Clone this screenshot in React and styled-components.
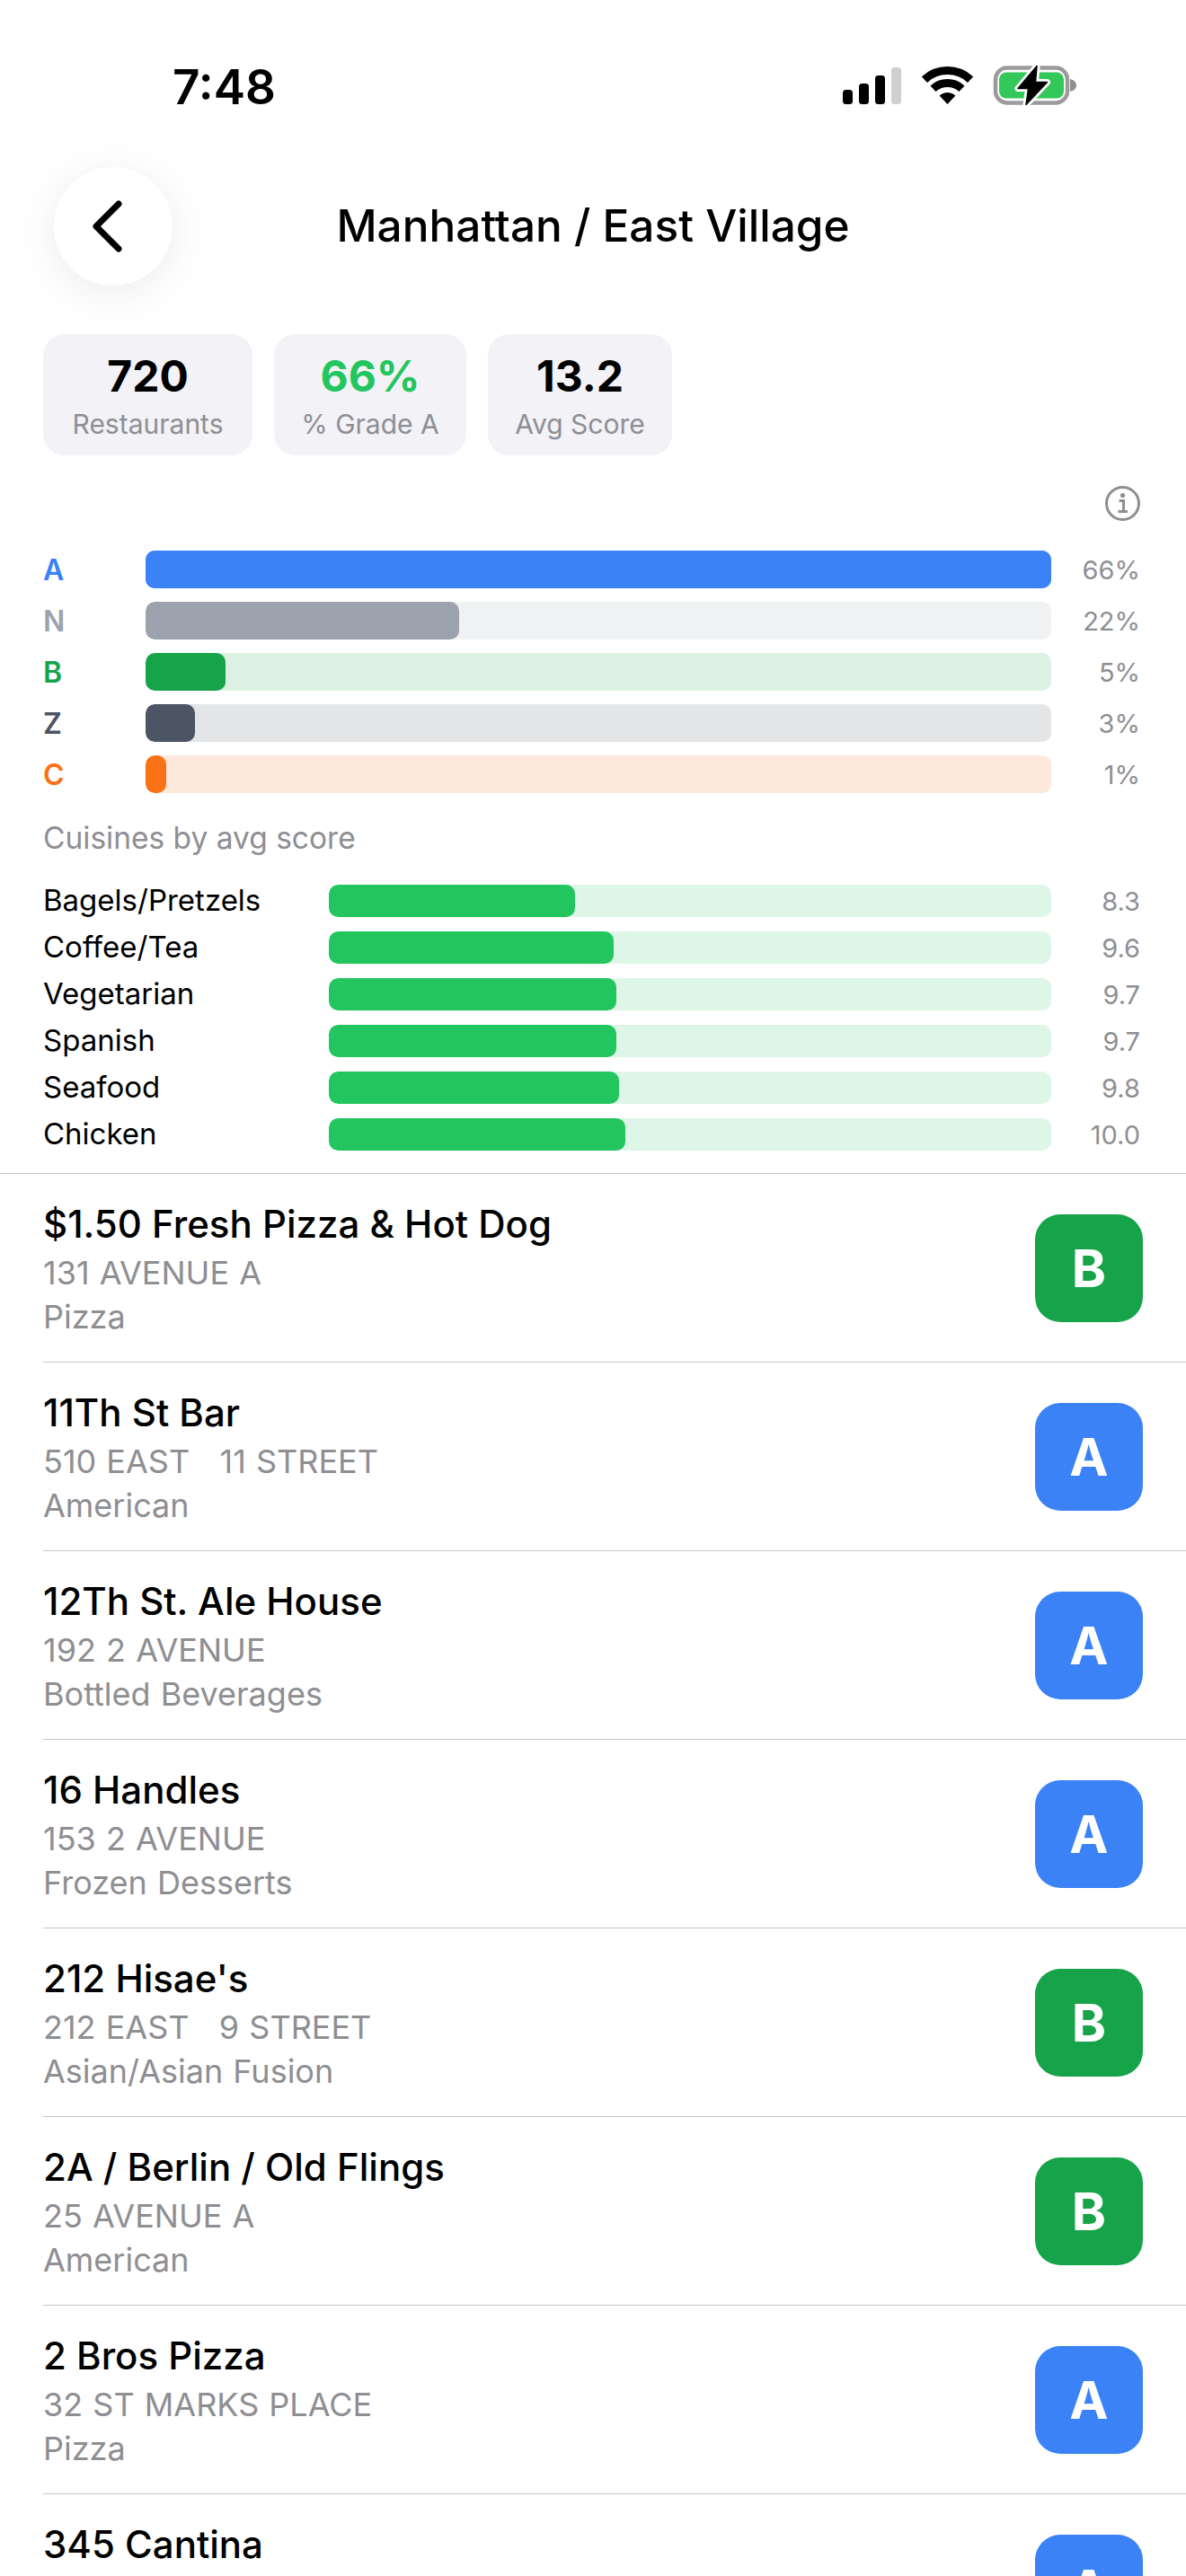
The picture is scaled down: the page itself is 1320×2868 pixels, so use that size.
import React from "react";
import styled, { createGlobalStyle } from "styled-components";

const GRADES = [
  { letter: "A", pct: "66%", width: 1008, color: "#3b82f6", track: "#3b82f6" },
  { letter: "N", pct: "22%", width: 349, color: "#9ca3af", track: "#f0f1f3" },
  { letter: "B", pct: "5%", width: 89, color: "#16a34a", track: "#dcf1e4" },
  { letter: "Z", pct: "3%", width: 55, color: "#4b5563", track: "#e4e5e7" },
  { letter: "C", pct: "1%", width: 23, color: "#f97316", track: "#fde8dc" },
];

const CUISINES = [
  { name: "Bagels/Pretzels", score: "8.3" },
  { name: "Coffee/Tea", score: "9.6" },
  { name: "Vegetarian", score: "9.7" },
  { name: "Spanish", score: "9.7" },
  { name: "Seafood", score: "9.8" },
  { name: "Chicken", score: "10.0" },
];

const RESTAURANTS = [
  { name: "$1.50 Fresh Pizza & Hot Dog", address: "131 AVENUE A", cuisine: "Pizza", grade: "B" },
  { name: "11Th St Bar", address: "510 EAST   11 STREET", cuisine: "American", grade: "A" },
  { name: "12Th St. Ale House", address: "192 2 AVENUE", cuisine: "Bottled Beverages", grade: "A" },
  { name: "16 Handles", address: "153 2 AVENUE", cuisine: "Frozen Desserts", grade: "A" },
  { name: "212 Hisae's", address: "212 EAST   9 STREET", cuisine: "Asian/Asian Fusion", grade: "B" },
  { name: "2A / Berlin / Old Flings", address: "25 AVENUE A", cuisine: "American", grade: "B" },
  { name: "2 Bros Pizza", address: "32 ST MARKS PLACE", cuisine: "Pizza", grade: "A" },
  { name: "345 Cantina", address: "", cuisine: "", grade: "A" },
];

const GlobalStyle = createGlobalStyle`
  html, body {
    margin: 0;
    padding: 0;
    background: #fff;
  }
  * {
    box-sizing: border-box;
  }
`;

function SignalIcon() {
  return (
    <svg width="65" height="41" viewBox="0 0 65 41">
      <rect x="0" y="25" width="11" height="16" rx="3.5" fill="#000" />
      <rect x="18" y="18" width="11" height="23" rx="3.5" fill="#000" />
      <rect x="36" y="9" width="11" height="32" rx="3.5" fill="#000" />
      <rect x="54" y="0" width="11" height="41" rx="3.5" fill="#cfcfcf" />
    </svg>
  );
}

function WifiIcon() {
  return (
    <svg width="57" height="42" viewBox="0 0 57 42">
      <path d="M2.9 14.6A37.5 37.5 0 0 1 54.1 14.6" fill="none" stroke="#000" strokeWidth="9" />
      <path d="M12.5 24.8A23.5 23.5 0 0 1 44.5 24.8" fill="none" stroke="#000" strokeWidth="9" />
      <path d="M28.5 42L19.6 32.5A13 13 0 0 1 37.4 32.5Z" fill="#000" />
    </svg>
  );
}

function BatteryIcon() {
  return (
    <svg width="92" height="44" viewBox="0 -0.5 92 44" style={{ overflow: "visible" }}>
      <rect x="2" y="2" width="80" height="39" rx="13" fill="none" stroke="#9b9b9b" strokeWidth="4.5" />
      <path d="M85 14.5c4 .8 7 3.4 7 7s-3 6.200-7 7z" fill="#8f8f8f" />
      <rect x="6" y="7" width="72" height="29" rx="8" fill="#34c759" />
      <path
        d="M48 0L27 25H38.500L36 43L59.500 18H46.500Z"
        fill="#000"
        stroke="#fff"
        strokeWidth="7"
        strokeLinejoin="round"
      />
      <path d="M48 0L27 25H38.500L36 43L59.500 18H46.500Z" fill="#000" stroke="#000" strokeWidth="1.500" strokeLinejoin="round" />
    </svg>
  );
}

function ChevronLeft() {
  return (
    <svg width="36" height="60" viewBox="0 0 36 60">
      <path
        d="M30 5L5 30L30 55"
        fill="none"
        stroke="#000"
        strokeWidth="7"
        strokeLinecap="round"
        strokeLinejoin="round"
      />
    </svg>
  );
}

function InfoIcon() {
  return (
    <svg width="39" height="39" viewBox="0 0 39 39">
      <circle cx="19.500" cy="19.500" r="18" fill="none" stroke="#8e8e93" strokeWidth="3" />
      <circle cx="19.500" cy="10.500" r="2.600" fill="#8e8e93" />
      <path d="M15.500 16.500H20.500V28M14.500 28.500H25" fill="none" stroke="#8e8e93" strokeWidth="3" />
    </svg>
  );
}

export default function App() {
  return (
    <Page>
      <GlobalStyle />
      <StatusBar>
        <Clock>7:48</Clock>
        <StatusIcons>
          <SignalIcon />
          <WifiIcon />
          <BatteryIcon />
        </StatusIcons>
      </StatusBar>

      <Header>
        <BackButton>
          <ChevronLeft />
        </BackButton>
        <Title>Manhattan / East Village</Title>
      </Header>

      <Stats>
        <StatCard $width={233}>
          <StatValue>720</StatValue>
          <StatLabel>Restaurants</StatLabel>
        </StatCard>
        <StatCard $width={214}>
          <StatValue $accent>66%</StatValue>
          <StatLabel>% Grade A</StatLabel>
        </StatCard>
        <StatCard $width={205}>
          <StatValue>13.2</StatValue>
          <StatLabel>Avg Score</StatLabel>
        </StatCard>
      </Stats>

      <InfoRow>
        <InfoIcon />
      </InfoRow>

      <GradeList>
        {GRADES.map((g) => (
          <GradeRow key={g.letter}>
            <GradeLetter $color={g.color}>{g.letter}</GradeLetter>
            <GradeTrack $track={g.track}>
              <BarFill $color={g.color} style={{ width: `${(g.width / 1008) * 100}%` }} />
            </GradeTrack>
            <BarValue>{g.pct}</BarValue>
          </GradeRow>
        ))}
      </GradeList>

      <SectionLabel>Cuisines by avg score</SectionLabel>

      <CuisineList>
        {CUISINES.map((c) => (
          <CuisineRow key={c.name}>
            <CuisineName>{c.name}</CuisineName>
            <CuisineTrack>
              <BarFill $color="#22c55e" style={{ width: `${(Number(c.score) * 33 / 804) * 100}%` }} />
            </CuisineTrack>
            <BarValue>{c.score}</BarValue>
          </CuisineRow>
        ))}
      </CuisineList>

      <RestaurantList>
        {RESTAURANTS.map((r) => (
          <RestaurantRow key={r.name}>
            <RestaurantBody>
              <RestaurantInfo>
                <RestaurantName>{r.name}</RestaurantName>
                <RestaurantMeta>{r.address}</RestaurantMeta>
                <RestaurantMeta>{r.cuisine}</RestaurantMeta>
              </RestaurantInfo>
              <GradeBadge $grade={r.grade}>{r.grade}</GradeBadge>
            </RestaurantBody>
          </RestaurantRow>
        ))}
      </RestaurantList>
    </Page>
  );
}

const Page = styled.div`
  width: 1320px;
  height: 2868px;
  overflow: hidden;
  background: #fff;
  color: #000;
  font-family: Inter, "Liberation Sans", sans-serif;
`;

const StatusBar = styled.div`
  height: 186px;
  padding: 8px 122px 0 192px;
  display: flex;
  justify-content: space-between;
  align-items: center;
`;

const Clock = styled.div`
  font-size: 53px;
  font-weight: 600;
  line-height: 1;
`;

const StatusIcons = styled.div`
  display: flex;
  align-items: center;
  gap: 23px;
  margin-top: -4px;
`;

const Header = styled.div`
  height: 132px;
  padding: 0 60px;
  display: grid;
  grid-template-columns: 132px 1fr 132px;
  align-items: center;
`;

const BackButton = styled.div`
  width: 132px;
  height: 132px;
  border-radius: 50%;
  background: #fff;
  box-shadow: 0 8px 48px rgba(0, 0, 0, 0.08);
  display: flex;
  align-items: center;
  justify-content: center;
  padding-right: 13px;
`;

const Title = styled.div`
  text-align: center;
  font-size: 49.5px;
  font-weight: 550;
  line-height: 1;
`;

const Stats = styled.div`
  margin-top: 54px;
  padding: 0 48px;
  display: flex;
  gap: 24px;
`;

const StatCard = styled.div`
  width: ${(p) => p.$width}px;
  height: 135px;
  padding-top: 3px;
  border-radius: 24px;
  background: #f2f2f7;
  display: flex;
  flex-direction: column;
  align-items: center;
  justify-content: center;
  gap: 8px;
`;

const StatValue = styled.div`
  font-size: 48px;
  font-weight: 700;
  line-height: 54px;
  color: ${(p) => (p.$accent ? "#22c55e" : "#000")};
`;

const StatLabel = styled.div`
  font-size: 30px;
  line-height: 36px;
  color: #8e8e93;
`;

const InfoRow = styled.div`
  margin-top: 34px;
  height: 39px;
  padding-right: 51px;
  display: flex;
  justify-content: flex-end;
`;

const GradeList = styled.div`
  margin-top: 33px;
  padding: 0 51px 0 48px;
  display: flex;
  flex-direction: column;
  gap: 15px;
`;

const GradeRow = styled.div`
  height: 42px;
  display: grid;
  grid-template-columns: 114px 1fr 99px;
  align-items: center;
`;

const GradeLetter = styled.div`
  font-size: 32px;
  font-weight: 600;
  color: ${(p) => p.$color};
`;

const GradeTrack = styled.div`
  height: 42px;
  border-radius: 10px;
  overflow: hidden;
  background: ${(p) => p.$track};
`;

const BarFill = styled.div`
  height: 100%;
  border-radius: 10px;
  background: ${(p) => p.$color};
`;

const BarValue = styled.div`
  text-align: right;
  font-size: 29px;
  color: #8e8e93;
`;

const SectionLabel = styled.div`
  margin-top: 30px;
  font-size: 33.5px;
  line-height: 40px;
  padding-left: 48px;
  color: #8e8e93;
`;

const CuisineList = styled.div`
  margin-top: 32px;
  padding: 0 51px 0 48px;
  display: flex;
  flex-direction: column;
  gap: 16px;
`;

const CuisineRow = styled.div`
  height: 36px;
  display: grid;
  grid-template-columns: 318px 1fr 99px;
  align-items: center;
`;

const CuisineName = styled.div`
  font-size: 33px;
  line-height: 36px;
  margin-top: -2px;
  color: #000;
`;

const CuisineTrack = styled.div`
  height: 36px;
  border-radius: 10px;
  overflow: hidden;
  background: #def6e7;
`;

const RestaurantList = styled.div`
  margin-top: 25px;
  border-top: 1px solid #c6c6c8;
`;

const RestaurantRow = styled.div`
  height: 210px;
  padding-left: 48px;
`;

const RestaurantBody = styled.div`
  height: 210px;
  padding-right: 48px;
  border-bottom: 1px solid #c6c6c8;
  display: flex;
  justify-content: space-between;
  align-items: center;
`;

const RestaurantInfo = styled.div`
  display: flex;
  flex-direction: column;
`;

const RestaurantName = styled.div`
  font-size: 42px;
  line-height: 60px;
  font-weight: 450;
`;

const RestaurantMeta = styled.div`
  font-size: 36px;
  line-height: 49px;
  height: 49px;
  word-spacing: 1px;
  white-space: pre;
  color: #8e8e93;
`;

const GradeBadge = styled.div`
  width: 120px;
  height: 120px;
  border-radius: 28px;
  display: flex;
  align-items: center;
  justify-content: center;
  font-size: 58px;
  font-weight: 700;
  color: #fff;
  background: ${(p) => (p.$grade === "A" ? "#3b82f6" : "#16a34a")};
`;
